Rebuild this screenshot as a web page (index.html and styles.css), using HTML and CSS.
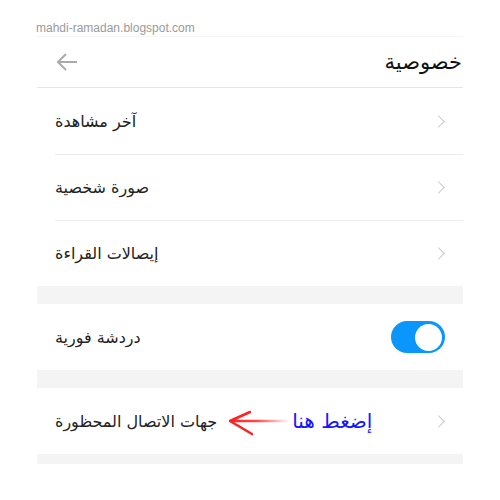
FILE: index.html
```html
<html lang="ar">
  <head>
    <meta charset="UTF-8" />
    <meta name="viewport" content="width=device-width, initial-scale=1.0" />
    <title>خصوصية</title>
    <link rel="stylesheet" href="styles.css">
  </head>
  <body>
    <div class="watermark">mahdi-ramadan.blogspot.com</div>
    <div class="panel">
      <div class="header">
        <svg class="back" width="22" height="20" viewBox="0 0 22 20">
          <path d="M21 10 H2 M10 2 L2 10 L10 18" fill="none" stroke="#aaa" stroke-width="2" />
        </svg>
        <h1 dir="rtl">خصوصية</h1>
      </div>

      <div class="group">
        <div class="row">
          <span class="label" dir="rtl">آخر مشاهدة</span>
          <span class="chevron"></span>
        </div>
        <div class="row">
          <span class="label" dir="rtl">صورة شخصية</span>
          <span class="chevron"></span>
        </div>
        <div class="row">
          <span class="label" dir="rtl">إيصالات القراءة</span>
          <span class="chevron"></span>
        </div>
      </div>

      <div class="gap"></div>

      <div class="group">
        <div class="row">
          <span class="label" dir="rtl">دردشة فورية</span>
          <span class="toggle on"><span class="knob"></span></span>
        </div>
      </div>

      <div class="gap"></div>

      <div class="group">
        <div class="row">
          <span class="label" dir="rtl">جهات الاتصال المحظورة</span>
          <svg class="pointer" width="64" height="26" viewBox="0 0 64 26">
            <defs>
              <!-- userSpaceOnUse: a flat line has no bbox height -->
              <linearGradient id="fade" gradientUnits="userSpaceOnUse" x1="0" y1="0" x2="62" y2="0">
                <stop offset="0" stop-color="#f22" />
                <stop offset="0.45" stop-color="#f44" />
                <stop offset="1" stop-color="#f44" stop-opacity="0" />
              </linearGradient>
            </defs>
            <path d="M2 11 H62" stroke="url(#fade)" stroke-width="2.5" />
            <path d="M22 2 L2 11 L24 24" fill="none" stroke="#f22" stroke-width="2.5" stroke-linecap="round" stroke-linejoin="round" />
          </svg>
          <span class="note" dir="rtl">إضغط هنا</span>
          <span class="chevron"></span>
        </div>
      </div>

      <div class="gap small"></div>
    </div>
  </body>
</html>
```

FILE: styles.css
```css
*,
::before,
::after {
  box-sizing: border-box;
}

body {
  margin: 0;
  font-family: "DejaVu Sans", "Liberation Sans", sans-serif;
  background-color: #fff;
  color: #222;
}

.watermark {
  font-family: "Liberation Sans", Arial, sans-serif;
  font-size: 12px;
  color: #9a9a9a;
  padding: 21px 0 0 36px;
  height: 36px;
}

.panel {
  width: 426px;
  margin-left: 37px;
  border-top: 1px solid #f6f6f6;
}

.header {
  display: flex;
  align-items: center;
  justify-content: space-between;
  height: 51px;
  padding: 0 1px 0 19px;
  border-bottom: 1px solid #e6e6e6;
}

.header h1 {
  margin: 0;
  font-size: 21px;
  font-weight: normal;
  color: #111;
}

.back {
  display: block;
}

.group {
  padding-left: 18px;
}

.row {
  display: flex;
  align-items: center;
  height: 66px;
  padding-right: 20px;
}

.row + .row {
  border-top: 1px solid #ececec;
}

.label {
  font-size: 16px;
  color: #222;
}

.chevron {
  margin-left: auto;
  width: 9px;
  height: 9px;
  border-top: 1px solid #c8c8c8;
  border-right: 1px solid #c8c8c8;
  transform: rotate(45deg);
}

.toggle {
  margin-left: auto;
  margin-right: -2px;
  width: 54px;
  height: 32px;
  border-radius: 16px;
  background-color: #0a96fa;
  display: flex;
  align-items: center;
  justify-content: flex-end;
  padding: 3px;
}

.knob {
  width: 27px;
  height: 27px;
  border-radius: 50%;
  background-color: #fff;
}

.pointer {
  display: block;
  margin-left: 11px;
  margin-top: 3px;
}

.note {
  font-size: 20px;
  color: #1414ff;
}

.gap {
  height: 18px;
  background-color: #f4f4f4;
}

.gap.small {
  height: 10px;
}
```
